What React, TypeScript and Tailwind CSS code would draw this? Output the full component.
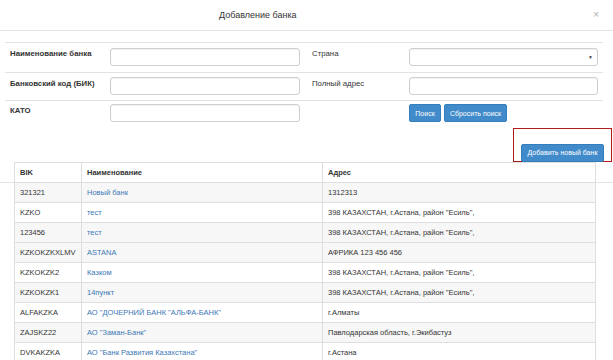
import React from "react";

const rows: [string, string, string, boolean][] = [
  ["321321", "Новый банк", "1312313", true],
  ["KZKO", "тест", "398 КАЗАХСТАН, г.Астана, район \"Есиль\",", false],
  ["123456", "тест", "398 КАЗАХСТАН, г.Астана, район \"Есиль\",", true],
  ["KZKOKZKXLMV", "ASTANA", "АФРИКА 123 456 456", true],
  ["KZKOKZK2", "Казком", "398 КАЗАХСТАН, г.Астана, район \"Есиль\",", false],
  ["KZKOKZK1", "14пункт", "398 КАЗАХСТАН, г.Астана, район \"Есиль\",", true],
  ["ALFAKZKA", "АО \"ДОЧЕРНИЙ БАНК \"АЛЬФА-БАНК\"", "г.Алматы", false],
  ["ZAJSKZ22", "АО \"Заман-Банк\"", "Павлодарская область, г.Экибастуз", true],
  ["DVKAKZKA", "АО \"Банк Развития Казахстана\"", "г.Астана", false],
];

function Input({ select }: { select?: boolean }) {
  return (
    <div className="h-[18px] rounded-[3px] border border-[#cfcfcf] bg-white shadow-[inset_0_1px_1px_rgba(0,0,0,0.06)] flex items-center justify-end pr-[4px]">
      {select && <span className="text-[5px] text-[#444] leading-none">▼</span>}
    </div>
  );
}

export default function App() {
  return (
    <div
      className="w-[613px] h-[360px] overflow-hidden bg-white relative text-[#333]"
      style={{ fontFamily: '"Liberation Sans", Arial, sans-serif' }}
    >
      <div className="h-[31px] border-b border-[#e5e5e5] flex items-center">
        <div className="pl-[219px] text-[9px] leading-none text-[#333]">Добавление банка</div>
        <div className="ml-auto pr-[14px] text-[10px] leading-none text-[#b0b0b0]">×</div>
      </div>

      <div className="mt-[11px] ml-[5px] w-[598px] text-[7.8px] leading-[9px]">
        <div className="flex h-[30px] border-t border-[#e3e3e3]">
          <div className="w-[105px] pl-[5px] pt-[6px] font-bold">Наименование банка</div>
          <div className="w-[190px] pt-[5px]"><Input /></div>
          <div className="w-[109px] pl-[12px] pt-[6px]">Страна</div>
          <div className="w-[189px] pt-[5px]"><Input select /></div>
        </div>
        <div className="flex h-[28px] border-t border-[#e3e3e3]">
          <div className="w-[105px] pl-[5px] pt-[6px] font-bold">Банковский код (БИК)</div>
          <div className="w-[190px] pt-[4px]"><Input /></div>
          <div className="w-[109px] pl-[12px] pt-[6px]">Полный адрес</div>
          <div className="w-[189px] pt-[4px]"><Input /></div>
        </div>
        <div className="flex h-[28px] border-t border-[#e3e3e3]">
          <div className="w-[105px] pl-[5px] pt-[5px] font-bold">КАТО</div>
          <div className="w-[190px] pt-[3px]"><Input /></div>
          <div className="w-[109px]"></div>
          <div className="pt-[3px] flex gap-[3px] text-[7px]">
            <button className="h-[18px] w-[32px] rounded-[2px] bg-[#428bca] border border-[#357ebd] text-white leading-none">Поиск</button>
            <button className="h-[18px] w-[63px] rounded-[2px] bg-[#428bca] border border-[#357ebd] text-white leading-none">Сбросить поиск</button>
          </div>
        </div>
      </div>

      <div className="flex justify-end pr-[1px]">
        <div className="w-[99px] h-[34px] border border-[#b01c1c] pl-[7px] pt-[9px]">
          <button className="h-[18px] w-[83px] rounded-[2px] bg-[#428bca] border border-[#357ebd] text-white text-[7px] leading-none">
            Добавить новый банк
          </button>
        </div>
      </div>

      <div className="absolute left-0 right-0 top-[182px] h-px bg-[#e3e3e3]"></div>

      <div className="relative ml-[14px] w-[581px]">
        <table className="w-[581px] table-fixed border-collapse text-[7.5px] leading-none">
          <colgroup>
            <col className="w-[67px]" />
            <col className="w-[241px]" />
            <col className="w-[273px]" />
          </colgroup>
          <thead>
            <tr className="bg-white">
              <th className="h-[20px] border border-[#dedede] px-[5px] text-left font-bold">BIK</th>
              <th className="h-[20px] border border-[#dedede] px-[5px] text-left font-bold">Наименование</th>
              <th className="h-[20px] border border-[#dedede] px-[5px] text-left font-bold">Адрес</th>
            </tr>
          </thead>
          <tbody>
            {rows.map(([bik, name, addr, gray], i) => (
              <tr key={i} className={gray ? "bg-[#f7f7f7]" : "bg-white"}>
                <td className="h-[20px] border border-[#dedede] px-[5px] whitespace-nowrap overflow-hidden">{bik}</td>
                <td className="h-[20px] border border-[#dedede] px-[5px] text-[#3c78b5] whitespace-nowrap">{name}</td>
                <td className="h-[20px] border border-[#dedede] px-[5px] whitespace-nowrap">{addr}</td>
              </tr>
            ))}
          </tbody>
        </table>
      </div>
    </div>
  );
}
